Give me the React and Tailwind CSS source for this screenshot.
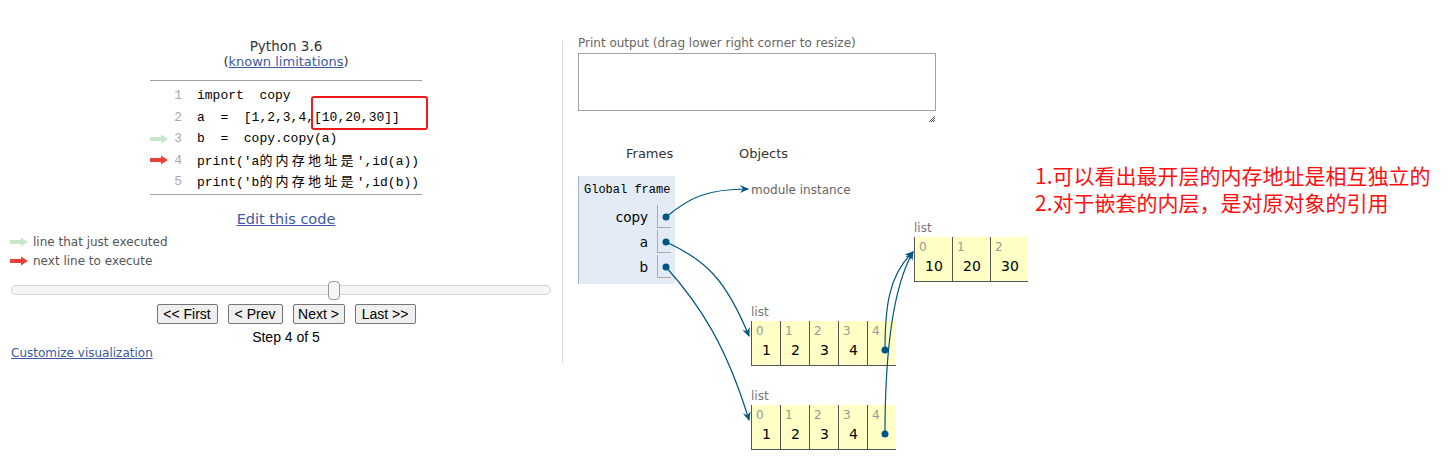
import React from "react";

const SANS = "font-['DejaVu_Sans','Noto_Sans_CJK_SC',sans-serif]";
const MONO = "font-['Liberation_Mono','Noto_Sans_CJK_SC',monospace]";

function Arrow({ color }) {
  return (
    <svg width="18" height="10" viewBox="0 0 18 10">
      <polygon points="0,3 11,3 11,0.5 18,5 11,9.5 11,7 0,7" fill={color} />
    </svg>
  );
}

function Cjk({ children }) {
  return <span className="font-['Noto_Sans_CJK_SC',sans-serif] tracking-[3.2px]">{children}</span>;
}

const codeLines = [
  { n: 1, code: <>import&nbsp;&nbsp;copy</> },
  { n: 2, code: <>a&nbsp;&nbsp;=&nbsp;&nbsp;[1,2,3,4,[10,20,30]]</> },
  { n: 3, code: <>b&nbsp;&nbsp;=&nbsp;&nbsp;copy.copy(a)</>, arrow: "#c8e6c9" },
  { n: 4, code: <>print('a<Cjk>的内存地址是</Cjk>',id(a))</>, arrow: "#e8423a" },
  { n: 5, code: <>print('b<Cjk>的内存地址是</Cjk>',id(b))</> },
];

function ListBox({ left, top, items, cellW }) {
  return (
    <div className="absolute" style={{ left, top: top - 17 }}>
      <div className={`${SANS} text-[12px] leading-[16px] text-[#777] h-[17px]`}>list</div>
      <div className="flex border-b border-[#555] bg-[#ffffc6] h-[45px]">
        {items.map((v, i) => (
          <div key={i} className="relative border-l border-[#555] h-full" style={{ width: cellW }}>
            <div className={`${SANS} absolute left-[4px] top-[2px] text-[12px] leading-[16px] text-[#999]`}>{i}</div>
            {v !== null && (
              <div className={`${SANS} absolute left-0 right-0 top-[20px] text-center text-[14px] leading-[18px] text-black pl-[1px]`}>{v}</div>
            )}
          </div>
        ))}
      </div>
    </div>
  );
}

export default function App() {
  return (
    <div className={`relative w-[1452px] h-[466px] bg-white overflow-hidden flex ${SANS}`}>
      {/* Left column */}
      <div className="w-[562px] pt-[38px]">
        <div className="pl-[10px] text-center text-[13.5px] leading-[16px] text-[#333]">Python 3.6</div>
        <div className="pl-[10px] text-center text-[13px] leading-[16px] text-[#333]">
          (<span className="text-[#3d58a2] underline">known limitations</span>)
        </div>
        <div className="relative ml-[150px] mt-[10px] w-[272px] border-y border-[#a0a0a0] pt-[4px] pb-[1px]">
          {codeLines.map((l) => (
            <div key={l.n} className="flex items-center h-[21.5px]">
              <div className="w-[22px] flex items-center">{l.arrow && <Arrow color={l.arrow} />}</div>
              <div className={`${MONO} w-[10px] text-right text-[13px] text-[#aaa]`}>{l.n}</div>
              <div className={`${MONO} ml-[15px] text-[13px] text-black whitespace-nowrap`}>{l.code}</div>
            </div>
          ))}
          <div className="absolute left-[161px] top-[15px] w-[117px] h-[34px] border-2 border-[#f01a1a] rounded-[3px]" />
        </div>
        <div className="pl-[10px] mt-[15px] text-center text-[14.5px] leading-[18px] text-[#3d58a2]">
          <span className="underline">Edit this code</span>
        </div>
        <div className="mt-[5px] pl-[10px] text-[12px] leading-[19px] text-[#555]">
          <div className="flex items-center gap-[5px]">
            <Arrow color="#c8e6c9" />
            <span>line that just executed</span>
          </div>
          <div className="flex items-center gap-[5px]">
            <Arrow color="#e8423a" />
            <span>next line to execute</span>
          </div>
        </div>
        <div className="relative ml-[11px] mt-[14px] w-[540px] h-[10px] rounded-full border border-[#d3d3d3] bg-[#f6f6f6]">
          <div className="absolute left-[316px] top-[-5px] w-[12px] h-[19px] rounded-[4px] border border-[#999] bg-[#f6f6f6]" />
        </div>
        <div className="pl-[10px] mt-[9px] flex justify-center gap-[10px] font-['Liberation_Sans',sans-serif] text-[14px]">
          {[["<< First", 61], ["< Prev", 55], ["Next >", 52], ["Last >>", 61]].map(([t, w]) => (
            <div key={t} className="h-[20px] flex items-center justify-center border border-[#767676] rounded-[2px] bg-[#efefef] text-black leading-none" style={{ width: w }}>
              {t}
            </div>
          ))}
        </div>
        <div className="pl-[10px] mt-[5px] text-center font-['Liberation_Sans',sans-serif] text-[14px] leading-[16px] text-black">Step 4 of 5</div>
        <div className="pl-[11px] mt-[1px] text-[12px] leading-[14px] text-[#3d58a2]">
          <span className="underline">Customize visualization</span>
        </div>
      </div>

      {/* Divider */}
      <div className="w-px bg-[#ddd] mt-[41px] h-[322px] shrink-0" />

      {/* Right column */}
      <div className="pl-[15px] pt-[35px]">
        <div className="text-[12px] leading-[16px] text-[#666]">Print output (drag lower right corner to resize)</div>
        <div className="mt-[2px] w-[358px] h-[58px] border border-[#a0a0a0] bg-white" />
        <div className="w-[358px] flex justify-end mt-[4px] pr-[1px]">
          <svg width="7" height="7" viewBox="0 0 7 7">
            <path d="M1 7 L7 1 M3 7 L7 3 M5 7 L7 5" stroke="#555" strokeWidth="1" />
          </svg>
        </div>

        {/* Diagram canvas: origin at page (578,140) */}
        <div className="relative mt-[18px] w-[870px] h-[320px]">
          <div className="absolute left-[48px] top-[6px] text-[13px] leading-[16px] text-[#333]">Frames</div>
          <div className="absolute left-[161px] top-[6px] text-[13px] leading-[16px] text-[#333]">Objects</div>

          {/* Global frame */}
          <div className="absolute left-0 top-[36px] w-[97px] h-[108px] bg-[#e2ebf6] border-l border-[#a6b3c6]">
            <div className={`${MONO} absolute left-[5px] top-[6px] text-[12px] leading-[16px] text-black`}>Global frame</div>
            {[["copy", 29], ["a", 54], ["b", 79]].map(([name, t]) => (
              <div key={name} className="absolute left-0 flex items-center" style={{ top: t }}>
                <div className="w-[70px] text-right text-[13.5px] leading-[22px] text-black pr-[1px]">{name}</div>
                <div className="ml-[8px] w-[14px] h-[23px] border-l border-b border-[#aaa]" />
              </div>
            ))}
          </div>

          <div className="absolute left-[173px] top-[42px] text-[12px] leading-[16px] text-[#666]">module instance</div>

          <ListBox left={336} top={97} items={[10, 20, 30]} cellW={38} />
          <ListBox left={173} top={181} items={[1, 2, 3, 4, null]} cellW={29} />
          <ListBox left={173} top={265} items={[1, 2, 3, 4, null]} cellW={29} />

          <svg className="absolute left-0 top-0 pointer-events-none" width="870" height="320" viewBox="0 0 870 320">
            <defs>
              <marker id="ah" markerWidth="10" markerHeight="10" refX="8" refY="4" orient="auto" markerUnits="userSpaceOnUse">
                <path d="M0,0 L9,4 L0,8 L3,4 Z" fill="#005583" />
              </marker>
            </defs>
            <g fill="none" stroke="#005583" strokeWidth="1.2">
              <path d="M88,77 C112,57 130,49 170,49" markerEnd="url(#ah)" />
              <path d="M88,102 C128,120 148,140 171,196" markerEnd="url(#ah)" />
              <path d="M88,127 C122,165 148,205 171,280" markerEnd="url(#ah)" />
              <path d="M307,210 C307,170 310,135 335,112" markerEnd="url(#ah)" />
              <path d="M307,294 C307,210 316,145 335,112" markerEnd="url(#ah)" />
            </g>
            <g fill="#005583">
              <circle cx="88" cy="77" r="3.5" />
              <circle cx="88" cy="102" r="3.5" />
              <circle cx="88" cy="127" r="3.5" />
              <circle cx="307" cy="210" r="3.5" />
              <circle cx="307" cy="294" r="3.5" />
            </g>
          </svg>

          <div className="absolute left-[457px] top-[22px] whitespace-nowrap font-['Noto_Sans_CJK_SC',sans-serif] text-[21px] text-[#ff1010]">
            <div className="h-[27px] leading-[27px]">1.可以看出最开层的内存地址是相互独立的</div>
            <div className="h-[27px] leading-[27px]">2.对于嵌套的内层，是对原对象的引用</div>
          </div>
        </div>
      </div>
    </div>
  );
}
